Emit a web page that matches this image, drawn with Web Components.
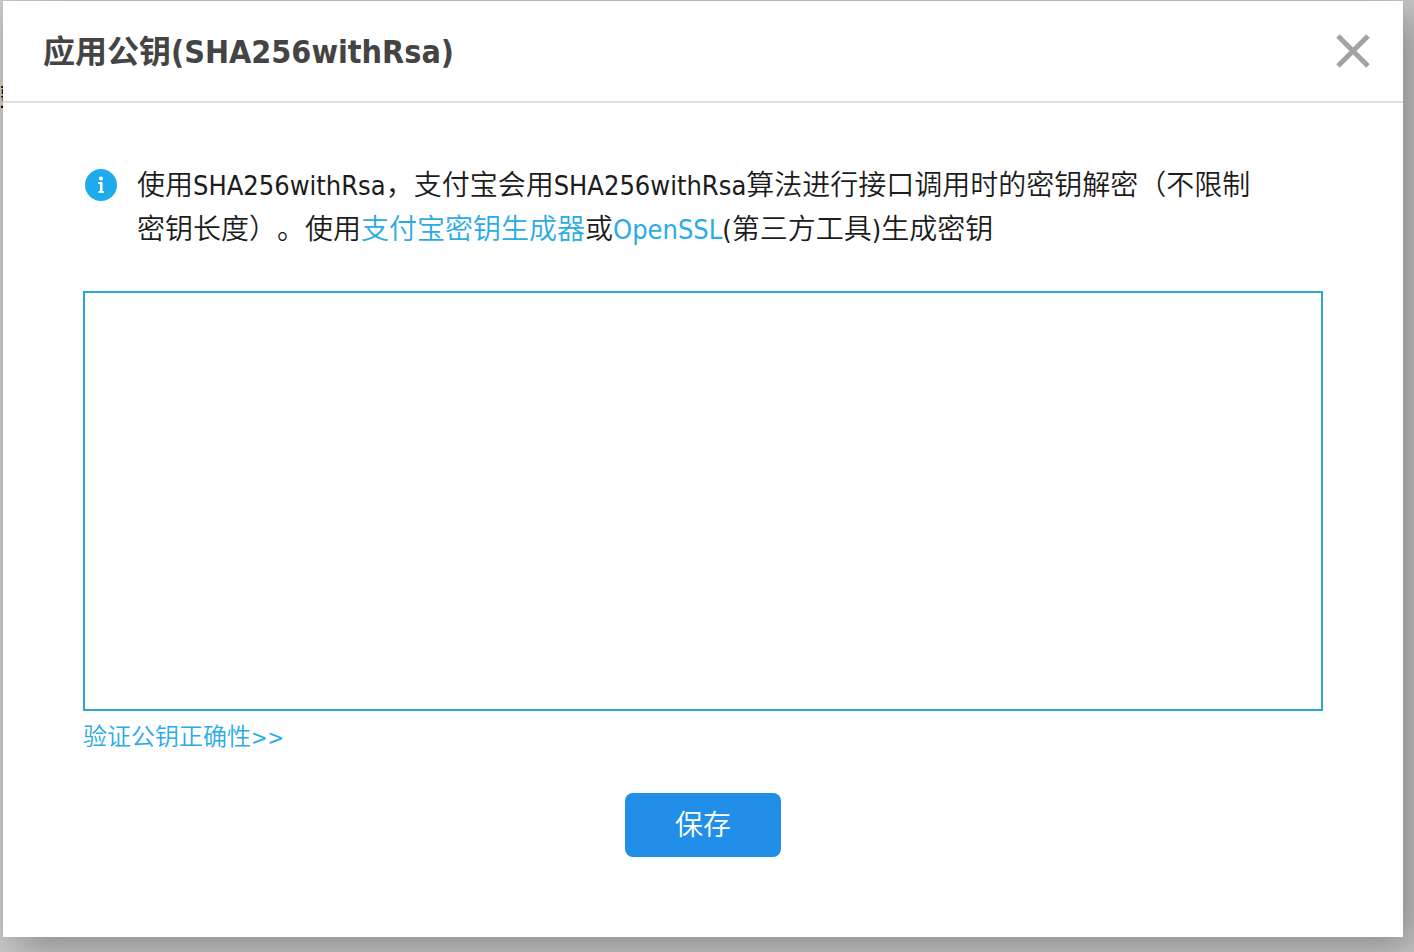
<!DOCTYPE html>
<html lang="zh-CN">
<head>
<meta charset="utf-8">
<meta name="viewport" content="width=device-width, initial-scale=1">
<title>应用公钥</title>
<style>
  body {
    margin: 0;
    min-height: 100vh;
    overflow: hidden;
    background: #cacaca;
    color: #1c1c1c;
    font-family: "Noto Sans CJK SC", sans-serif;
    font-size: 28px;
    font-weight: 350;
    line-height: 44px;
    text-spacing-trim: space-all;
    text-autospace: no-autospace;
  }
</style>
</head>
<body>
<key-page>
  <key-dialog>
    <span slot="title">应用公钥<latin-text>(SHA256withRsa)</latin-text></span>
    <info-tip>使用<latin-text>SHA256withRsa</latin-text>，支付宝会用<latin-text>SHA256withRsa</latin-text>算法进行接口调用时的密钥解密（不限制密钥长度）。使用<text-link>支付宝密钥生成器</text-link>或<text-link><latin-text>OpenSSL</latin-text></text-link><latin-text>(</latin-text>第三方工具<latin-text>)</latin-text>生成密钥</info-tip>
    <key-form></key-form>
  </key-dialog>
</key-page>

<script>
class KeyPage extends HTMLElement {
  constructor() {
    super();
    this.attachShadow({ mode: "open" });
  }

  static get styles() {
    return /* css */`
      :host {
        display: block;
        position: relative;
        padding: 1px 11px 15px 3px;
      }

      /* page text that sits under the dialog */
      .behind {
        position: absolute;
        left: 0;
        top: 82px;
        color: #000;
        font-size: 24px;
        font-weight: bold;
        line-height: 28px;
      }
    `;
  }

  connectedCallback() {
    this.shadowRoot.innerHTML = /* html */`
    <style>${KeyPage.styles}</style>
    <span class="behind" aria-hidden="true">整</span>
    <slot></slot>`;
  }
}

class LatinText extends HTMLElement {
  constructor() {
    super();
    this.attachShadow({ mode: "open" });
  }

  static get styles() {
    return /* css */`
      :host {
        display: inline;
        font-family: "DejaVu Sans Condensed", "DejaVu Sans", sans-serif;
        font-stretch: condensed;
        font-size: var(--latin-size, 27px);
        line-height: 1;
      }
    `;
  }

  // inline element: no whitespace around the slot
  connectedCallback() {
    this.shadowRoot.innerHTML = `<style>${LatinText.styles}</style><slot></slot>`;
  }
}

class TextLink extends HTMLElement {
  constructor() {
    super();
    this.attachShadow({ mode: "open" });
  }

  static get styles() {
    return /* css */`
      :host { display: inline; }
      a { color: #2aabe4; text-decoration: none; }
    `;
  }

  connectedCallback() {
    this.shadowRoot.innerHTML = `<style>${TextLink.styles}</style><a href="#"><slot></slot></a>`;
  }
}

class KeyDialog extends HTMLElement {
  constructor() {
    super();
    this.attachShadow({ mode: "open" });
  }

  static get styles() {
    return /* css */`
      :host {
        --latin-size: 27px;

        display: block;
        position: relative;
        background: #fff;
        box-shadow: 12px 12px 40px rgba(0, 0, 0, .32);
      }

      header {
        --latin-size: 32px;

        display: flex;
        justify-content: space-between;
        align-items: center;
        padding: 0 32px 0 40px;
        height: 100px;
        border-bottom: 2px solid #e0e0e0;
      }

      h1 {
        margin: 0;
        padding-bottom: 4px;
        color: #444;
        font-size: 32px;
        line-height: 48px;
        font-weight: bold;
      }

      button {
        display: flex;
        padding: 0;
        border: 0;
        background: none;
        cursor: pointer;
      }

      main {
        padding: 58px 80px 80px;
      }
    `;
  }

  connectedCallback() {
    this.shadowRoot.innerHTML = /* html */`
    <style>${KeyDialog.styles}</style>
    <header>
      <h1><slot name="title"></slot></h1>
      <button type="button" aria-label="关闭">
        <svg width="36" height="36" viewBox="0 0 36 36" fill="none" stroke="#a3a3a3" stroke-width="5">
          <path d="M3 3l30 30M33 3L3 33"/>
        </svg>
      </button>
    </header>
    <main><slot></slot></main>`;
  }
}

class InfoTip extends HTMLElement {
  constructor() {
    super();
    this.attachShadow({ mode: "open" });
  }

  static get styles() {
    return /* css */`
      :host {
        display: flex;
        gap: 20px;
        padding: 0 60px 0 2px;
      }

      svg {
        flex: none;
        margin-top: 8px;
      }

      p {
        margin: 0;
      }
    `;
  }

  connectedCallback() {
    this.shadowRoot.innerHTML = /* html */`
    <style>${InfoTip.styles}</style>
    <svg width="32" height="32" viewBox="0 0 32 32" aria-hidden="true">
      <circle cx="16" cy="16" r="16" fill="#1eabec"/>
      <circle cx="16" cy="9.500" r="2" fill="#fff"/>
      <path d="M13 13h4.500v9h1.500v2h-5.500v-2h1.500v-7h-2z" fill="#fff"/>
    </svg>
    <p><slot></slot></p>`;
  }
}

class KeyForm extends HTMLElement {
  constructor() {
    super();
    this.attachShadow({ mode: "open" });
  }

  static get styles() {
    return /* css */`
      :host {
        display: block;
        margin-top: 42px;
      }

      form {
        display: flex;
        flex-direction: column;
      }

      textarea {
        box-sizing: border-box;
        width: 100%;
        height: 420px;
        padding: 12px;
        border: 2px solid #2ba6d3;
        outline: 0;
        resize: none;
        background: #fff;
        font: inherit;
      }

      .verify {
        --latin-size: 22px;

        align-self: flex-start;
        margin-top: 6px;
        color: #2aabe4;
        font-size: 24px;
        line-height: 36px;
        text-decoration: none;
      }

      button {
        align-self: center;
        margin-top: 40px;
        padding: 8px 50px 12px;
        border: 0;
        border-radius: 8px;
        background: #218fe7;
        color: #fff;
        font: inherit;
        cursor: pointer;
      }
    `;
  }

  connectedCallback() {
    this.shadowRoot.innerHTML = /* html */`
    <style>${KeyForm.styles}</style>
    <form>
      <textarea aria-label="应用公钥"></textarea>
      <a class="verify" href="#">验证公钥正确性<latin-text>&gt;&gt;</latin-text></a>
      <button type="button">保存</button>
    </form>`;
  }
}

customElements.define("latin-text", LatinText);
customElements.define("text-link", TextLink);
customElements.define("info-tip", InfoTip);
customElements.define("key-form", KeyForm);
customElements.define("key-dialog", KeyDialog);
customElements.define("key-page", KeyPage);
</script>
</body>
</html>
